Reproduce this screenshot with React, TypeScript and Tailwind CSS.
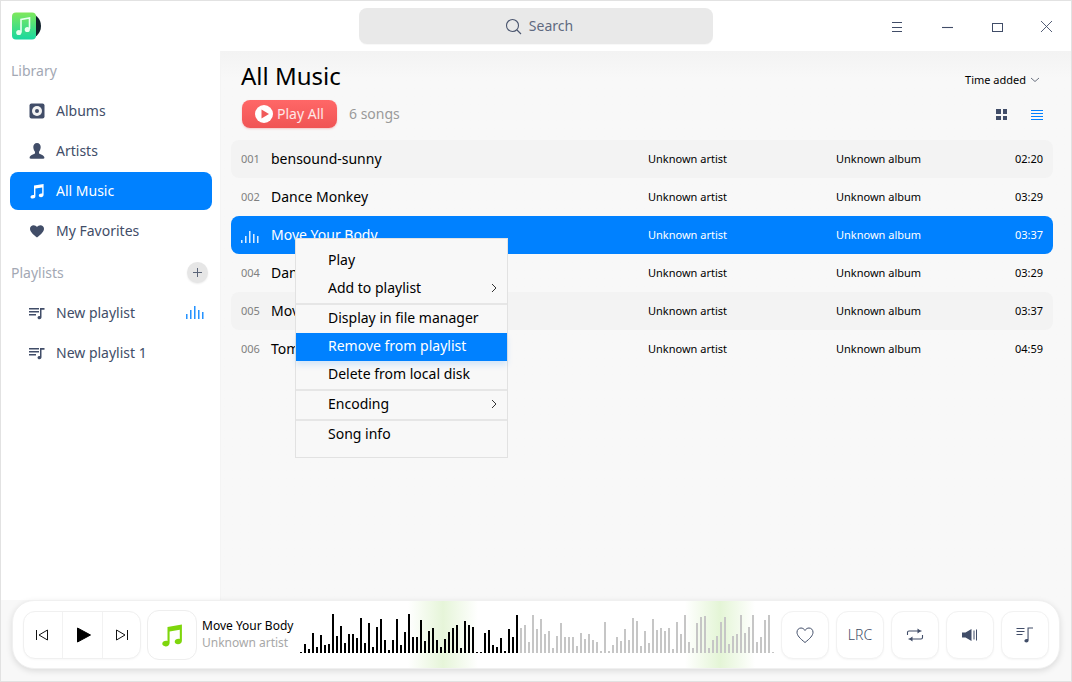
import React from "react";

const ink = "#414d68";
const blue = "#0081ff";

const wave = [1,9,4,20,6,18,8,9,39,17,27,10,19,19,15,35,10,30,6,26,34,13,3,13,34,8,21,39,16,16,33,12,22,25,13,6,14,21,25,28,5,32,28,26,1,1,20,23,8,6,15,2,24,16,38,
25,28,11,38,24,34,19,22,5,17,30,16,16,16,7,20,14,19,13,11,2,31,2,8,16,12,24,13,35,32,7,22,10,34,23,25,22,25,4,31,19,38,11,5,30,36,37,5,13,17,31,36,9,17,19,38,20,26,38,11,16,33,38,1];

const songs = [
  ["001", "bensound-sunny", "02:20"],
  ["002", "Dance Monkey", "03:29"],
  ["003", "Move Your Body", "03:37"],
  ["004", "Dance Monkey", "03:29"],
  ["005", "Move Your Body", "03:37"],
  ["006", "Tomorrow", "04:59"],
];

function Bars({ color, heights }: { color: string; heights: number[] }) {
  return (
    <svg width="18" height="13" viewBox="0 0 18 13" fill="none" stroke={color} strokeWidth="1.300">
      {heights.map((h, i) => (
        <path key={i} d={`M${0.8 + i * 4} 13v-${h}`} />
      ))}
    </svg>
  );
}

function Note({ color = ink, size = 16 }: { color?: string; size?: number }) {
  return (
    <svg width={size} height={size} viewBox="0 0 16 16">
      <path
        fill={color}
        d="M5 2.600 14.600 1v10.800c0 1.300-1.100 2.400-2.600 2.400-1.300 0-2.200-.7-2.200-1.700 0-1.200 1.200-2 2.600-2 .3 0 .6 0 .8.100V4.500L6.400 5.600v7.700c0 1.300-1.100 2.300-2.600 2.300-1.300 0-2.300-.7-2.300-1.700 0-1.200 1.200-2 2.600-2 .3 0 .6 0 .9.100z"
      />
    </svg>
  );
}

function ListNote() {
  return (
    <svg width="16" height="16" viewBox="0 0 16 16" fill={ink}>
      <rect x="0" y="3" width="10" height="1.500" />
      <rect x="0" y="6" width="10" height="1.500" />
      <rect x="0" y="9" width="7" height="1.500" />
      <path d="M11 3h4.500v1.700h-3v7.600c0 1.200-.9 2-2.100 2-1 0-1.900-.6-1.900-1.500 0-1 .9-1.700 2-1.700.2 0 .4 0 .5.100z" />
    </svg>
  );
}

function NavItem({ icon, label, active, right }: { icon: React.ReactNode; label: string; active?: boolean; right?: React.ReactNode }) {
  return (
    <div
      className={
        "h-[38px] mb-[2px] rounded-lg flex items-center pl-[19px] pr-2 pb-[2px] text-[14px] " +
        (active ? "bg-[#0081ff] text-white" : "text-[#414d68]")
      }
    >
      <div className="w-[16px] h-[16px] flex items-center justify-center mr-[11px] mt-[2px]">{icon}</div>
      <span className="flex-1">{label}</span>
      {right}
    </div>
  );
}

function Sidebar() {
  return (
    <div className="w-[220px] bg-white pt-[9px] pl-[9px] pr-[8px] border-r border-[#f4f4f4] shrink-0">
      <div className="h-[22px] leading-[22px] pl-px text-[14px] text-[#a3a8b4] mb-[10px]">Library</div>
      <NavItem
        label="Albums"
        icon={
          <svg width="16" height="16" viewBox="0 0 16 16">
            <rect x="0.500" y="0.500" width="15" height="15" rx="2" fill={ink} />
            <circle cx="8" cy="8" r="5" fill="#f2f2f2" />
            <circle cx="8" cy="8" r="2" fill={ink} />
          </svg>
        }
      />
      <NavItem
        label="Artists"
        icon={
          <svg width="16" height="16" viewBox="0 0 16 16" fill={ink}>
            <path d="M8 0c2.300 0 3.700 1.700 3.700 4S10.600 8 10 8.800v1.400c0 .8 5.400 1.800 5.400 4.300 0 .8-.5 1.200-1 1.200H1.600c-.6 0-1-.4-1-1.200 0-2.500 5.400-3.500 5.400-4.300V8.800C5.400 8 4.300 6.300 4.300 4S5.700 0 8 0z" />
          </svg>
        }
      />
      <NavItem active label="All Music" icon={<Note color="#ffffff" />} />
      <NavItem
        label="My Favorites"
        icon={
          <svg width="16" height="16" viewBox="0 0 16 16" fill={ink}>
            <path d="M8 14.500C3.500 11 1 8.600 1 5.800 1 3.600 2.700 2.200 4.600 2.200c1.400 0 2.600.7 3.400 1.900.8-1.200 2-1.900 3.400-1.900 1.900 0 3.600 1.400 3.600 3.600 0 2.800-2.500 5.200-7 8.700z" />
          </svg>
        }
      />
      <div className="flex items-center justify-between h-[22px] mt-[11px] mb-[11px] pl-px pr-[4px]">
        <span className="text-[14px] text-[#a3a8b4]">Playlists</span>
        <div className="w-[21px] h-[21px] rounded-full bg-[#e6e6e6] shadow-[0_1px_2px_rgba(0,0,0,0.08)] flex items-center justify-center">
          <svg width="11" height="11" viewBox="0 0 11 11" stroke="#5a6478" strokeWidth="1" fill="none">
            <path d="M5.500 1v9M1 5.500h9" />
          </svg>
        </div>
      </div>
      <NavItem label="New playlist" icon={<ListNote />} right={<Bars color="#0081ff" heights={[5, 9, 13, 9, 7]} />} />
      <NavItem label="New playlist 1" icon={<ListNote />} />
    </div>
  );
}

function TitleBar() {
  return (
    <div className="h-[50px] bg-white shrink-0 grid grid-cols-[1fr_354px_1fr] items-center">
      <div className="pl-[10px]">
        <svg width="32" height="28" viewBox="0 0 32 28">
          <defs>
            <linearGradient id="lg" x1="0" y1="0" x2="0" y2="1">
              <stop offset="0" stopColor="#7ee85c" />
              <stop offset="1" stopColor="#18d8a0" />
            </linearGradient>
          </defs>
          <circle cx="17" cy="14" r="13" fill="#10202a" />
          <rect x="1" y="0.500" width="24" height="27" rx="4" fill="url(#lg)" />
          <path d="M10 20.500V7.500L18.500 6v11" fill="none" stroke="#e8fff0" strokeWidth="1.600" />
          <circle cx="7.800" cy="20.500" r="2.600" fill="#e8fff0" />
          <circle cx="16.300" cy="17.500" r="2.600" fill="#e8fff0" />
        </svg>
      </div>
      <div className="h-[36px] rounded-lg bg-[#e9e9e9] flex items-center justify-center gap-[7px] pl-[6px] pb-[2px] text-[14px] text-[#5f6980] shadow-[0_1px_1px_rgba(0,0,0,0.03)]">
        <svg width="17" height="17" viewBox="0 0 17 17" fill="none" stroke="#4a556e" strokeWidth="1.100" className="mt-[2px]">
          <circle cx="7.500" cy="7.500" r="6" />
          <path d="M12 12l4 4" />
        </svg>
        Search
      </div>
      <div className="flex justify-end">
        {[
          <path key="m" d="M3 3.500h10M3 8.500h10M3 12.500h10" strokeWidth="1" />,
          <path key="n" d="M3 8.500h11" strokeWidth="1.100" />,
          <rect key="x" x="3.500" y="4.500" width="10" height="8" strokeWidth="1" />,
          <path key="c" d="M2 2l11 11M13 2 2 13" strokeWidth="0.900" />,
        ].map((p, i) => (
          <div key={i} className="w-[50px] h-[50px] flex items-center justify-center">
            <svg width="16" height="16" viewBox="-1 -1 16 16" fill="none" stroke={ink}>
              {p}
            </svg>
          </div>
        ))}
      </div>
    </div>
  );
}

function SongRow({ s, i }: { s: string[]; i: number }) {
  const active = i === 2;
  return (
    <div
      className={
        "h-[38px] rounded-lg flex items-center pl-[10px] pr-[10px] " +
        (active ? "bg-[#0081ff] text-white" : i % 2 === 0 ? "bg-[#f3f3f3] text-black" : "text-black")
      }
    >
      <div className={"w-[30px] " + (active ? "mt-[3px]" : "pb-[4px]")}>
        {active ? <Bars color="#ffffff" heights={[3, 7, 12, 9, 7]} /> : <span className="text-[11px] text-[#808080]">{s[0]}</span>}
      </div>
      <div className="w-[377px] text-[14px] whitespace-nowrap pb-[2px]">{s[1]}</div>
      <div className="w-[188px] text-[11px]">Unknown artist</div>
      <div className="flex-1 text-[11px]">Unknown album</div>
      <div className="text-[11px]">{s[2]}</div>
    </div>
  );
}

function MenuItem({ label, sub, hi }: { label: string; sub?: boolean; hi?: boolean }) {
  return (
    <div
      className={
        "h-[28px] flex items-center pl-[32px] pr-[10px] pb-[4px] text-[14px] " +
        (hi ? "bg-[#0081ff] text-white shadow-[0_4px_6px_rgba(0,129,255,0.15)] relative" : "text-black")
      }
    >
      <span className="flex-1">{label}</span>
      {sub && (
        <svg width="6" height="10" viewBox="0 0 6 10" fill="none" stroke="#333" strokeWidth="1" className="mt-[2px]">
          <path d="M1 1l4 4-4 4" />
        </svg>
      )}
    </div>
  );
}

function Menu() {
  return (
    <div className="absolute left-[294px] top-[237px] w-[213px] h-[220px] bg-[#f8f8f8] border border-[#e2e2e2] pt-[8px]">
      <MenuItem label="Play" />
      <MenuItem label="Add to playlist" sub />
      <div className="h-[2px] bg-[#e6e6e6]" />
      <MenuItem label="Display in file manager" />
      <MenuItem label="Remove from playlist" hi />
      <MenuItem label="Delete from local disk" />
      <div className="h-[2px] bg-[#e6e6e6]" />
      <MenuItem label="Encoding" sub />
      <div className="h-[2px] bg-[#e6e6e6]" />
      <MenuItem label="Song info" />
    </div>
  );
}

function Content() {
  return (
    <div className="flex-1 bg-gradient-to-b from-[#f3f3f3] to-[#f8f8f8] to-[5%] pt-[7px] pl-[10px] pr-[18px] min-w-0">
      <div className="flex items-start justify-between pl-[10px] pr-[13px] h-[36px]">
        <div className="text-[24px] leading-[36px] text-black">All Music</div>
        <div className="flex items-center gap-[4px] text-[11px] text-black mt-[14px]">
          Time added
          <svg width="10" height="6" viewBox="0 0 10 6" fill="none" stroke="#6b7280" strokeWidth="1">
            <path d="M1 1l4 3.500L9 1" />
          </svg>
        </div>
      </div>
      <div className="flex items-center pl-[11px] pr-[9px] mt-[6px] h-[28px]">
        <div className="w-[95px] h-[28px] rounded-lg bg-gradient-to-b from-[#ff6767] to-[#f05454] shadow-[0_1px_2px_rgba(240,80,80,0.3)] flex items-center pl-[13px] text-[14px] text-white/85 gap-[4px]">
          <svg width="18" height="18" viewBox="0 0 18 18">
            <circle cx="9" cy="9" r="9" fill="#fff" />
            <path d="M6.500 4.500v9L14 9z" fill="#f05a5a" />
          </svg>
          <span className="pb-[2px]">Play All</span>
        </div>
        <div className="ml-[12px] pb-[2px] text-[14px] text-[#9a9a9a] flex-1">6 songs</div>
        <div className="flex items-center gap-[21px]">
          <svg width="11" height="12" viewBox="0 0 11 12" fill={ink}>
            <rect x="0" y="1" width="5" height="5" />
            <rect x="7" y="1" width="4" height="5" />
            <rect x="0" y="8" width="5" height="4" />
            <rect x="7" y="8" width="4" height="4" />
          </svg>
          <svg width="16" height="16" viewBox="0 0 16 16" fill="none" stroke={blue} strokeWidth="1">
            <path d="M3 4.500h12M3 7.500h12M3 10.500h12M3 13.500h12" />
          </svg>
        </div>
      </div>
      <div className="mt-[12px] flex flex-col">
        {songs.map((s, i) => (
          <SongRow key={i} s={s} i={i} />
        ))}
      </div>
    </div>
  );
}

function Btn({ children }: { children: React.ReactNode }) {
  return (
    <div className="w-[48px] h-[48px] rounded-xl bg-white border border-[#f2f2f2] shadow-[0_1px_2px_rgba(0,0,0,0.04)] flex items-center justify-center">
      {children}
    </div>
  );
}

function Footer() {
  return (
    <div className="h-[81px] bg-[#f8f8f8] shrink-0 pl-[11px] pr-[11px]">
      <div className="h-[69px] rounded-[22px] bg-white border border-[#f0f0f0] shadow-[0_2px_6px_rgba(0,0,0,0.12)] flex items-center pl-[10px] pr-[10px]">
        <div className="w-[118px] h-[48px] rounded-xl border border-[#f0f0f0] bg-white flex shadow-[0_1px_2px_rgba(0,0,0,0.03)]">
          <div className="w-[39px] flex items-center justify-center border-r border-[#f2f2f2] pr-[3px]">
            <svg width="14" height="14" viewBox="0 0 14 14" fill="none" stroke="#111" strokeWidth="1">
              <path d="M1.500 2v10M12.500 2v10L4 7z" />
            </svg>
          </div>
          <div className="w-[40px] flex items-center justify-center border-r border-[#f2f2f2] pl-[2px]">
            <svg width="16" height="18" viewBox="0 0 16 18" fill="#000" stroke="#000" strokeWidth="1" strokeLinejoin="round">
              <path d="M1.500 2v14L14.500 9z" />
            </svg>
          </div>
          <div className="flex-1 flex items-center justify-center pl-px">
            <svg width="14" height="14" viewBox="0 0 14 14" fill="none" stroke="#111" strokeWidth="1">
              <path d="M12.500 2v10M1.500 2v10L10 7z" />
            </svg>
          </div>
        </div>
        <div className="ml-[6px] w-[50px] h-[50px] rounded-xl border border-[#eeeeee] flex items-center justify-center">
          <Note color="#7ed60c" size={24} />
        </div>
        <div className="ml-[5px] w-[98px] leading-[16px]">
          <div className="text-[12px] text-black whitespace-nowrap">Move Your Body</div>
          <div className="text-[12px] text-[#a8a8a8] whitespace-nowrap mt-px">Unknown artist</div>
        </div>
        <div className="relative w-[474px] h-[67px] overflow-hidden flex items-end gap-[2px] pb-[15px]">
          <div className="absolute left-[108px] top-0 w-[70px] h-full bg-gradient-to-r from-transparent via-[#e6f5d9] to-transparent" />
          <div className="absolute left-[385px] top-0 w-[70px] h-full bg-gradient-to-r from-transparent via-[#e4f5d6] to-transparent" />
          {wave.map((h, i) => (
            <div
              key={i}
              className={"relative w-[2px] shrink-0 " + (i < 55 ? "bg-black" : "bg-[#c6c6c6]")}
              style={{ height: h }}
            />
          ))}
        </div>
        <div className="flex gap-[7px] ml-auto">
          <Btn>
            <svg width="18" height="18" viewBox="1 1 18 18" fill="none" stroke={ink} strokeWidth="1">
              <path d="M10 17.500C5 13.500 2 10.500 2 7.200 2 4.800 3.800 3 6 3c1.600 0 3.100.9 4 2.500C10.900 3.900 12.400 3 14 3c2.200 0 4 1.800 4 4.200 0 3.300-3 6.300-8 10.300z" />
            </svg>
          </Btn>
          <Btn>
            <span className="text-[14px] font-light text-[#414d68]">LRC</span>
          </Btn>
          <Btn>
            <svg width="18" height="18" viewBox="0 0 18 18" fill="none" stroke={ink} strokeWidth="1.100">
              <path d="M1.500 9V6.500a1.500 1.500 0 0 1 1.500-1.500h12.500M16.500 9v2.500a1.500 1.500 0 0 1-1.500 1.500H2.500" />
              <path d="M11.500 2.500v5L15 5zM6.500 10.500v5L3 13z" fill={ink} stroke="none" />
            </svg>
          </Btn>
          <Btn>
            <svg width="18" height="18" viewBox="0 0 18 18" fill={ink}>
              <path d="M1 6.500h3.500L10.500 3v12l-6-3.500H1z" />
              <rect x="12.500" y="4.500" width="1" height="9" />
              <rect x="15" y="3.500" width="1" height="11" />
            </svg>
          </Btn>
          <Btn>
            <svg width="18" height="18" viewBox="0 0 18 18" fill={ink}>
              <rect x="0.500" y="2" width="8" height="1" />
              <rect x="0.500" y="5" width="8" height="1" />
              <rect x="0.500" y="8" width="6" height="1" />
              <path d="M11.500 1.500H17v1.100h-4.400v11.900c0 1.200-1 2-2.200 2-1.200 0-2-.7-2-1.700 0-1.100 1-1.900 2.200-1.900.3 0 .6 0 .9.100z" />
            </svg>
          </Btn>
        </div>
      </div>
    </div>
  );
}

export default function App() {
  return (
    <div className="relative w-[1072px] h-[682px] overflow-hidden border border-[#e2e2e2] flex flex-col font-['Noto_Sans',sans-serif] bg-white">
      <TitleBar />
      <div className="flex flex-1 min-h-0">
        <Sidebar />
        <Content />
      </div>
      <Footer />
      <Menu />
    </div>
  );
}
